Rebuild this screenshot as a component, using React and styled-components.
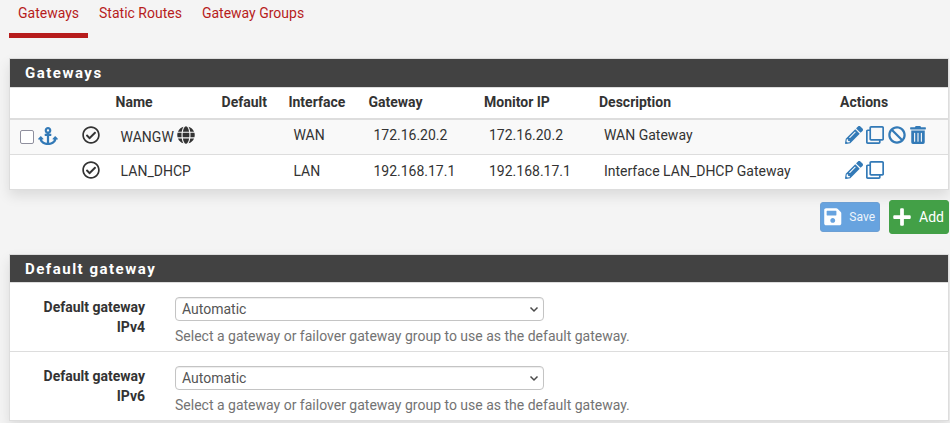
import React from "react";
import styled, { createGlobalStyle, css } from "styled-components";
import {
  FaAnchor,
  FaGlobe,
  FaRegCheckCircle,
  FaPencilAlt,
  FaRegClone,
  FaBan,
  FaTrashAlt,
  FaSave,
  FaPlus,
} from "react-icons/fa";

const GlobalStyle = createGlobalStyle`
  * { box-sizing: border-box; }
  body {
    margin: 0;
    background: #f4f4f4;
    color: #333;
    font: 14px/20px Roboto, "Liberation Sans", sans-serif;
    overflow: hidden;
  }
`;

const Page = styled.main`
  width: 950px;
  height: 423px;
  padding-left: 9px;
  padding-right: 1px;
  overflow: hidden;
`;

const Tabs = styled.nav`
  display: flex;
  height: 38px;
  margin-bottom: 20px;
`;

const Tab = styled.a`
  padding: 3px 9px 0;
  margin-right: 2px;
  color: #b71c1c;
  white-space: nowrap;
  border-bottom: 5px solid ${(p) => (p.$active ? "#b71c1c" : "transparent")};
`;

const Panel = styled.section`
  background: #fff;
  border: 1px solid #ddd;
  box-shadow: 0 6px 12px rgba(0, 0, 0, 0.1);
`;

const PanelTitle = styled.h2`
  margin: 0;
  height: ${(p) => p.$height}px;
  padding-left: 15px;
  background: #424242;
  border-bottom: 1px solid #ddd;
  color: #fff;
  font-size: 15px;
  font-weight: 700;
  line-height: 28px;
  letter-spacing: 1.5px;
`;

const columns = css`
  display: grid;
  grid-template-columns: 62px 38.6px 106px 66.8px 80px 115.6px 115px 241px 1fr;
`;

const HeadRow = styled.div`
  ${columns}
  height: 32px;
  border-bottom: 2px solid #ddd;
  font-weight: 700;
  line-height: 29px;
`;

const HeadCell = styled.div`
  padding-left: 5px;
  white-space: nowrap;
`;

const Row = styled.div`
  ${columns}
  height: ${(p) => (p.$striped ? 35 : 34)}px;
  background: ${(p) => (p.$striped ? "#f9f9f9" : "#fff")};
  border-bottom: ${(p) => (p.$striped ? "1px solid #ddd" : "0")};
`;

const Cell = styled.div`
  display: flex;
  align-items: flex-start;
  gap: ${(p) => p.$gap || 0}px;
  padding: ${(p) => p.$top || 5}px 0 0 10px;
  white-space: nowrap;
  svg { flex: none; font-size: 18px; }
`;

const StatusCell = styled(Cell)`
  padding-top: 6px;
`;

const NameText = styled.span`
  padding-top: ${(p) => (p.$lowered ? 1 : 0)}px;
`;

const Check = styled.input`
  width: 14px;
  height: 14px;
  margin: 2px 0 0;
  appearance: none;
  background: #fff;
  border: 1px solid #8f8f9d;
  border-radius: 2px;
`;

const Actions = styled(Cell)`
  color: #337ab7;
`;

const AnchorHandle = styled.span`
  display: flex;
  margin-top: -1px;
  color: #337ab7;
  svg { width: 20px; height: 18px; }
`;

const ButtonBar = styled.div`
  display: flex;
  justify-content: flex-end;
  align-items: center;
  gap: 9px;
  height: 34px;
  margin: 10px 0 20px;
`;

const Button = styled.button`
  display: flex;
  align-items: center;
  justify-content: space-between;
  width: 60px;
  height: ${(p) => (p.$small ? 30 : 34)}px;
  padding: 0 4px 0 ${(p) => (p.$small ? 2 : 2.4)}px;
  border: 1px solid ${(p) => (p.$small ? "#6c9fd4" : "#43a047")};
  border-radius: 3px;
  background: ${(p) => (p.$small ? "#67a3df" : "#43a047")};
  color: ${(p) => (p.$small ? "#eef5fc" : "#fff")};
  font-family: inherit;
  font-size: ${(p) => (p.$small ? 12 : 14)}px;
  svg { flex: none; color: #fff; }
`;

const FormRow = styled.div`
  display: grid;
  grid-template-columns: 135px 1fr;
  column-gap: 30px;
  height: ${(p) => (p.$last ? 68 : 69)}px;
  padding-top: 14px;
  border-bottom: ${(p) => (p.$last ? "0" : "1px solid #ddd")};
`;

const Label = styled.label`
  width: 105px;
  justify-self: end;
  text-align: right;
  font-weight: 700;
`;

const Select = styled.div`
  display: flex;
  align-items: center;
  justify-content: space-between;
  width: 369px;
  height: 24px;
  padding: 0 4px 0 6px;
  border: 1px solid #c4c4c4;
  border-radius: 4px;
  box-shadow: inset 0 1px 1px rgba(0, 0, 0, 0.075);
  color: #555;
`;

const Help = styled.div`
  margin-top: 5px;
  color: #737373;
`;

const tabs = ["Gateways", "Static Routes", "Gateway Groups"];
const headings = ["", "", "Name", "Default", "Interface", "Gateway", "Monitor IP", "Description", "Actions"];
const gateways = [
  { name: "WANGW", iface: "WAN", ip: "172.16.20.2", description: "WAN Gateway", editable: true },
  { name: "LAN_DHCP", iface: "LAN", ip: "192.168.17.1", description: "Interface LAN_DHCP Gateway" },
];

function GatewayRow({ gateway }) {
  const { name, iface, ip, description, editable } = gateway;
  const textTop = editable ? 5 : 6;
  return (
    <Row $striped={editable}>
      <Cell $top={8} $gap={4}>
        {editable && (
          <>
            <Check type="checkbox" aria-label={name} />
            <AnchorHandle><FaAnchor preserveAspectRatio="none" /></AnchorHandle>
          </>
        )}
      </Cell>
      <StatusCell><FaRegCheckCircle /></StatusCell>
      <Cell $top={6} $gap={3}>
        <NameText $lowered={editable}>{name}</NameText>
        {editable && <FaGlobe />}
      </Cell>
      <Cell />
      <Cell $top={textTop}>{iface}</Cell>
      <Cell $top={textTop}>{ip}</Cell>
      <Cell $top={textTop}>{ip}</Cell>
      <Cell $top={textTop}>{description}</Cell>
      <Actions $top={6} $gap={3.5}>
        <FaPencilAlt />
        <FaRegClone />
        {editable && <FaBan />}
        {editable && <FaTrashAlt />}
      </Actions>
    </Row>
  );
}

function Chevron() {
  return (
    <svg width="10" height="8" viewBox="0 0 10 8" fill="none" stroke="#4a4a4a" strokeWidth="1.5">
      <path d="M1.5 2.5 5 6 8.5 2.5" />
    </svg>
  );
}

export default function App() {
  return (
    <>
      <GlobalStyle />
      <Page>
        <Tabs>
          {tabs.map((tab, i) => (
            <Tab key={tab} $active={i === 0}>{tab}</Tab>
          ))}
        </Tabs>
        <Panel>
          <PanelTitle $height={29}>Gateways</PanelTitle>
          <HeadRow>
            {headings.map((heading, i) => (
              <HeadCell key={i}>{heading}</HeadCell>
            ))}
          </HeadRow>
          {gateways.map((gateway) => (
            <GatewayRow key={gateway.name} gateway={gateway} />
          ))}
        </Panel>
        <ButtonBar>
          <Button $small><FaSave size={19.5} />Save</Button>
          <Button><FaPlus size={20} />Add</Button>
        </ButtonBar>
        <Panel>
          <PanelTitle $height={28}>Default gateway</PanelTitle>
          {["IPv4", "IPv6"].map((version, i) => (
            <FormRow key={version} $last={i === 1}>
              <Label>Default gateway {version}</Label>
              <div>
                <Select>Automatic<Chevron /></Select>
                <Help>Select a gateway or failover gateway group to use as the default gateway.</Help>
              </div>
            </FormRow>
          ))}
        </Panel>
      </Page>
    </>
  );
}
